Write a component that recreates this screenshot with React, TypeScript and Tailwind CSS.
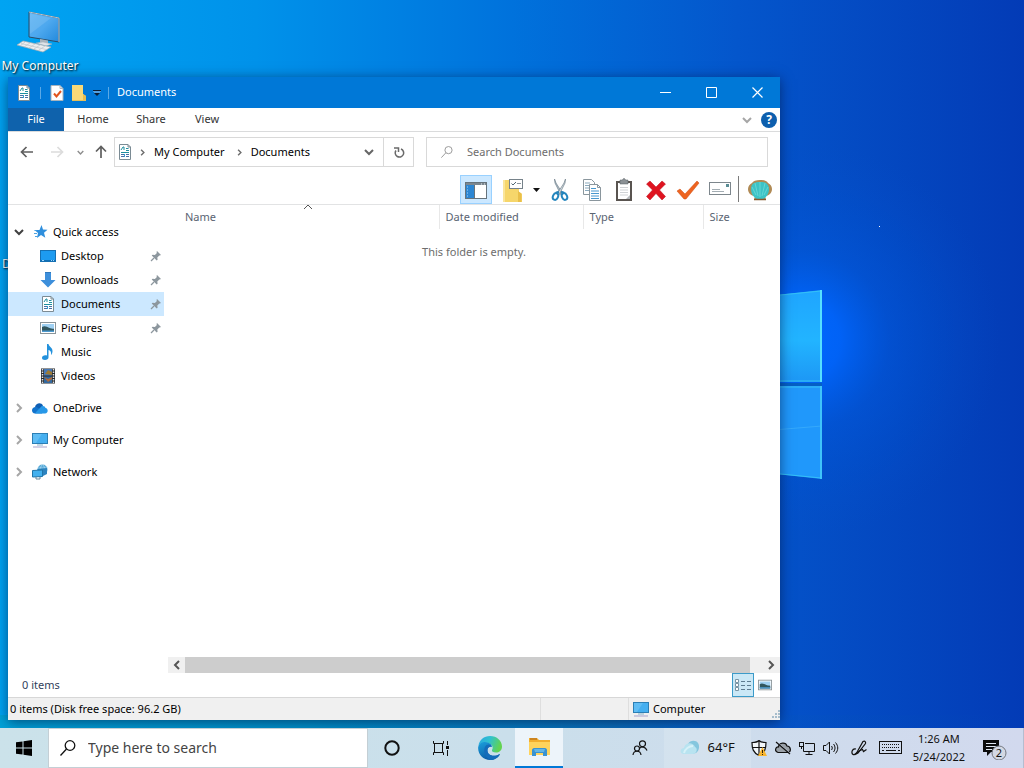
import React from "react";

type IconProps = { className?: string };

interface TreeItemProps {
  label: string;
  icon: React.ReactNode;
  pinned?: boolean;
  selected?: boolean;
}

const Wallpaper: React.FC = () => (
  <svg
    className="absolute inset-0 w-full h-full"
    viewBox="0 0 1024 768"
    preserveAspectRatio="xMaxYMid slice"
    aria-hidden="true"
  >
    <defs>
      <linearGradient id="sky" x1="0" y1="0.1" x2="1" y2="0.1">
        <stop offset="0" stopColor="#00a4f2" />
        <stop offset="0.25" stopColor="#0092ea" />
        <stop offset="0.5" stopColor="#0072dc" />
        <stop offset="0.72" stopColor="#0456cc" />
        <stop offset="1" stopColor="#033bb6" />
      </linearGradient>
      <linearGradient id="floor" x1="0" y1="0" x2="1" y2="0">
        <stop offset="0" stopColor="#00a2d8" />
        <stop offset="0.3" stopColor="#0090c8" />
        <stop offset="0.6" stopColor="#0a6cb8" />
        <stop offset="0.76" stopColor="#0554c4" stopOpacity="0.6" />
        <stop offset="1" stopColor="#0342b4" stopOpacity="0" />
      </linearGradient>
      <radialGradient id="glow" cx="800" cy="340" r="200" gradientUnits="userSpaceOnUse">
        <stop offset="0" stopColor="#0068ff" />
        <stop offset="0.2" stopColor="#0066ff" stopOpacity="0.85" />
        <stop offset="0.45" stopColor="#005ce6" stopOpacity="0.4" />
        <stop offset="1" stopColor="#0050cc" stopOpacity="0" />
      </radialGradient>
      <linearGradient id="paneTop" x1="0" y1="0" x2="0" y2="1">
        <stop offset="0" stopColor="#1fa5ff" />
        <stop offset="0.55" stopColor="#22b4ff" />
        <stop offset="1" stopColor="#1d97f5" />
      </linearGradient>
    </defs>
    <rect width="1024" height="768" fill="url(#sky)" />
    <rect y="715" width="1024" height="53" fill="url(#floor)" />
    <rect x="600" y="120" width="424" height="440" fill="url(#glow)" />
    <path d="M700 303 822 290V382H700z" fill="url(#paneTop)" />
    <path d="M700 383h122v3H700z" fill="#0560c4" />
    <path d="M700 386H822V479L700 466z" fill="#2098fb" />
    <path d="M700 436 822 426" stroke="#35a9fb" strokeWidth="1" />
    <path d="M700 303 821 291V381H700M700 387H821V478L700 466" fill="none" stroke="#35c1f6" strokeWidth="1" />
    <path d="M821 290v92" stroke="#55e0ff" strokeWidth="2" />
    <path d="M821 386v93" stroke="#3fc4fa" strokeWidth="2" />
    <rect x="879" y="226" width="1" height="1" fill="#fff" />
  </svg>
);

const DesktopComputerIcon: React.FC<IconProps> = ({ className }) => (
  <svg className={className} viewBox="0 0 48 44" aria-hidden="true">
    <defs>
      <linearGradient id="screen" x1="0" y1="0" x2="1" y2="1">
        <stop offset="0" stopColor="#5db4f4" />
        <stop offset="0.5" stopColor="#4da8ee" />
        <stop offset="1" stopColor="#2289dc" />
      </linearGradient>
    </defs>
    <path d="M13 2 43 8V32L13 27z" fill="url(#screen)" stroke="#2b4b66" strokeWidth="1" />
    <path d="M13 2 43 8V32" fill="none" stroke="#b9c3ca" strokeWidth="1" />
    <path d="M14 3.500 35 8 14 24z" fill="#fff" opacity="0.12" />
    <path d="M24 29l8 1.500v4h-8z" fill="#aab4bd" />
    <path d="M20 33l7-1 9 2-6 2z" fill="#dfe3e8" stroke="#a4afb8" strokeWidth="0.500" />
    <path d="M7 31 35 37 27 42 1 35z" fill="#eceef0" stroke="#a2abb2" strokeWidth="0.700" />
    <path d="M5 33.500 30 39.500M9 32l-5 4M14 33l-6 4M19 34l-6 4M24 35l-6 4M29 36l-6 4" stroke="#bdc4ca" strokeWidth="0.700" />
  </svg>
);

const DocumentIcon: React.FC<IconProps> = ({ className }) => (
  <svg className={className} viewBox="0 0 16 16" aria-hidden="true">
    <path d="M2.500.500h8.500l2.500 2.500v12.500h-11z" fill="#fff" stroke="#7b8b94" />
    <path d="M11 .500v2.500h2.500" fill="none" stroke="#7b8b94" />
    <path d="M4 6 6 3h1v3M9 4.500h2.500M9 6.500h3M4 8.500h8" fill="none" stroke="#1f8fa0" />
    <path d="M4 10.500h3M4 12.500h3M9 10.500h3M9 12.500h3" stroke="#4a6fa5" />
    <path d="M7.500 10v3" stroke="#35a0d0" />
  </svg>
);

const CheckedPageIcon: React.FC<IconProps> = ({ className }) => (
  <svg className={className} viewBox="0 0 16 16" aria-hidden="true">
    <path d="M2 .500h9l3 3v12H2z" fill="#fff" stroke="#a9b4bd" />
    <path d="M11 .500v3h3" fill="none" stroke="#a9b4bd" />
    <path d="M5 8.500l2.500 3L12 6" fill="none" stroke="#e2541d" strokeWidth="2" />
  </svg>
);

const SmallFolderIcon: React.FC<IconProps> = ({ className }) => (
  <svg className={className} viewBox="0 0 16 16" aria-hidden="true">
    <path d="M1 0h11v9l3 2v5H1z" fill="#f9d978" />
    <path d="M12 9l3 2v5h-3z" fill="#e9bd4e" />
    <path d="M1 15.500h14" stroke="#e6c05a" />
  </svg>
);

const CustomizeIcon: React.FC<IconProps> = ({ className }) => (
  <svg className={className} viewBox="0 0 8 8" aria-hidden="true">
    <path d="M0 1.500h8" stroke="#0b1c33" />
    <path d="M1 4h6L4 7z" fill="#0b1c33" />
    <path d="M0 2.500h8M1 3.500h6" stroke="#9fc9ee" strokeWidth="0.500" />
  </svg>
);

type Direction = "down" | "right" | "left" | "up";

const chevrons: Record<Direction, string> = {
  down: "M1 3l4 4 4-4",
  right: "M3 1l4 4-4 4",
  left: "M7 1L3 5l4 4",
  up: "M1 7l4-4 4 4",
};

const Chevron: React.FC<IconProps & { dir: Direction; width?: number }> = ({ className, dir, width = 1.5 }) => (
  <svg className={className} viewBox="0 0 10 10" aria-hidden="true">
    <path d={chevrons[dir]} fill="none" stroke="currentColor" strokeWidth={width} />
  </svg>
);

const Arrow: React.FC<IconProps & { d: string }> = ({ className, d }) => (
  <svg className={className} viewBox="0 0 14 14" aria-hidden="true">
    <path d={d} fill="none" stroke="currentColor" strokeWidth="1.700" />
  </svg>
);

const PinIcon: React.FC<IconProps> = ({ className }) => (
  <svg className={className} viewBox="0 0 12 12" aria-hidden="true">
    <path d="M7 1l4 4-1.200.600-.500-.200-2 2 .300 2.300-.900.900L1.700 5.600l.900-.900 2.300.300 2-2-.400-1z" fill="#8d979e" />
    <path d="M4 8L1 11" stroke="#8d979e" strokeWidth="1.300" />
  </svg>
);

const StarIcon = () => (
  <svg className="w-4 h-4" viewBox="0 0 16 16" aria-hidden="true">
    <path d="M9.500 1l1.500 4.500 4.500.200-3.500 3 1.300 5L9 11l-4 3 1-5-3.500-3h5z" fill="#2f8fdd" />
    <path d="M2 9.500h3M3 12.500h3M4.500 6.500h-2" stroke="#4da3e2" />
  </svg>
);

const DesktopIcon = () => (
  <svg className="w-4 h-4" viewBox="0 0 16 16" aria-hidden="true">
    <rect x="0.500" y="2.500" width="15" height="11" fill="#1d9bf0" stroke="#1570b3" />
    <path d="M1 12.500h14" stroke="#0f6fb5" />
    <path d="M2 12.500h2M11 12.500h1M13 12.500h1" stroke="#9dd6ff" />
  </svg>
);

const DownloadIcon = () => (
  <svg className="w-4 h-4" viewBox="0 0 16 16" aria-hidden="true">
    <path d="M5 0h6v8h4.500L8 15.500.500 8H5z" fill="#3d8fdb" />
    <path d="M5 .500h6" stroke="#2f78bd" />
  </svg>
);

const PictureIcon: React.FC<IconProps> = ({ className }) => (
  <svg className={className} viewBox="0 0 16 16" aria-hidden="true">
    <rect x="0.500" y="2.500" width="15" height="11" fill="#fff" stroke="#8a9499" />
    <rect x="2" y="4" width="12" height="8" fill="#9fd0f2" />
    <path d="M2 7c3-1.500 5 0 7 .800s3 1 5 1V12H2z" fill="#31565e" />
    <path d="M2 10.500h12V12H2z" fill="#4d9ad0" />
  </svg>
);

const MusicIcon = () => (
  <svg className="w-4 h-4" viewBox="0 0 16 16" aria-hidden="true">
    <path d="M7 0h1.500c.500 3 4 3.500 4 7 0 1.500-.500 3-1.500 4 .500-3-.500-4.500-2.500-5v7.500C8.500 15 7 16 5 16s-3-1-3-2.300 1.500-2.500 3.300-2.500c.700 0 1.200.100 1.700.300z" fill="#2391dc" />
  </svg>
);

const VideoIcon = () => (
  <svg className="w-4 h-4" viewBox="0 0 16 16" aria-hidden="true">
    <rect x="1" y="0.500" width="14" height="15" fill="#25282c" />
    <path d="M2.500 1v15M13.500 1v15" stroke="#e4e4e4" strokeWidth="1.500" strokeDasharray="1.500 1" />
    <rect x="4" y="1" width="8" height="6.500" fill="#4779b8" />
    <path d="M5 6l3-4 4 2v3z" fill="#9c7a35" />
    <rect x="4" y="8.500" width="8" height="6.500" fill="#33699f" />
    <path d="M4 9l4 2 4-2v2l-4 3z" fill="#b26a38" />
  </svg>
);

const OneDriveIcon = () => (
  <svg className="w-4 h-4" viewBox="0 0 16 16" aria-hidden="true">
    <path d="M3 7c1-4 6-5 8-1.500L7 10z" fill="#0f5fb4" />
    <path d="M0 10.500C0 8 2 6.500 4.500 7L12 11l-2 2.500H3c-2 0-3-1.500-3-3z" fill="#1273cc" />
    <path d="M8 8c1.500-3 5-2.500 5.500 0 3 .500 3 5.500-.500 5.500H3c2-3 3-3.500 5-5.500z" fill="#2798e8" />
  </svg>
);

const ComputerIcon: React.FC<IconProps> = ({ className }) => (
  <svg className={className} viewBox="0 0 16 16" aria-hidden="true">
    <rect x="0.500" y="1.500" width="15" height="10" fill="#45aff0" stroke="#2c7fb5" />
    <path d="M1 2h9L4 11H1z" fill="#7ccbf8" opacity="0.500" />
    <path d="M5 13h6" stroke="#8ab3cb" />
    <path d="M1 15h14" stroke="#a7a3cc" />
  </svg>
);

const NetworkIcon = () => (
  <svg className="w-4 h-4" viewBox="0 0 16 16" aria-hidden="true">
    <circle cx="10.500" cy="5.500" r="5" fill="#56a9d8" />
    <path d="M10.500.500c-3 3-3 7 0 10M10.500.500c3 3 3 7 0 10M6 4h9.500" fill="none" stroke="#b5def4" strokeWidth="0.700" />
    <path d="M5 5l10-1v6l-4 2z" fill="#2d83bf" />
    <path d="M.500 6.500l10-.500v6.500l-10 .500z" fill="#42b0ee" stroke="#1f75a9" />
    <path d="M4 13v2h4v-2" fill="none" stroke="#65869a" />
  </svg>
);

const PaneIcon = () => (
  <svg className="w-6 h-5" viewBox="0 0 24 20" aria-hidden="true">
    <rect x="1.500" y="2.500" width="21" height="16" fill="#fff" stroke="#66737c" />
    <path d="M2 4h20" stroke="#7b8790" strokeWidth="2" />
    <path d="M17 4h1M20 4h1" stroke="#e8eef2" />
    <rect x="2" y="5" width="8" height="13" fill="#2c86d3" />
    <path d="M3 7h1M3 10h1M3 13h1M3 16h1" stroke="#a9d4f6" />
    <path d="M10.500 5v13" stroke="#66737c" />
  </svg>
);

const FolderOptionsIcon = () => (
  <svg className="w-6 h-6" viewBox="0 0 24 24" aria-hidden="true">
    <path d="M2 2h16v12l3 2v8H2z" fill="#f6d66b" />
    <path d="M2 2h2v22H2z" fill="#fae59a" />
    <path d="M17 13l3.500 2.500V24H17z" fill="#e9bf4a" />
    <rect x="8.500" y="1.500" width="13" height="9" fill="#fff" stroke="#76828a" />
    <path d="M10.500 5.500l1.500 1.500 3-3" fill="none" stroke="#4f6573" />
    <path d="M16 5.500h4" stroke="#8d979e" />
  </svg>
);

const CutIcon = () => (
  <svg className="w-6 h-6" viewBox="0 0 24 24" aria-hidden="true">
    <path d="M6.500 1l1.500 4 7 11-2 1L7 5z" fill="#b4c2cb" stroke="#70808b" strokeWidth="0.700" />
    <path d="M17.500 1L16 5 9 16l2 1 6-12z" fill="#d8e1e6" stroke="#70808b" strokeWidth="0.700" />
    <path d="M11 14l-3 1M13 14l3 1" stroke="#2683b8" strokeWidth="2.500" />
    <ellipse cx="7.500" cy="18.500" rx="2.500" ry="3.500" transform="rotate(25 7.500 18.500)" fill="none" stroke="#2485bd" strokeWidth="2" />
    <ellipse cx="16.500" cy="18.500" rx="2.500" ry="3.500" transform="rotate(-25 16.500 18.500)" fill="none" stroke="#2485bd" strokeWidth="2" />
  </svg>
);

const CopyIcon = () => (
  <svg className="w-6 h-6" viewBox="0 0 24 24" aria-hidden="true">
    <path d="M3.500 1.500h8l3 3v12h-11z" fill="#fff" stroke="#8a969d" />
    <path d="M5 5h5M5 7.500h7M5 10h7M5 12.500h7" stroke="#8aa9bd" />
    <path d="M9.500 6.500h8l3 3v13h-11z" fill="#fff" stroke="#8a969d" />
    <path d="M17.500 6.500v3h3" fill="none" stroke="#8a969d" />
    <path d="M11 10.500h5M11 13h8M11 15.500h8M11 18h8M11 20.500h8" stroke="#4898cf" />
  </svg>
);

const PasteIcon = () => (
  <svg className="w-6 h-6" viewBox="0 0 24 24" aria-hidden="true">
    <path d="M4 3h16v20H4z" fill="#595450" />
    <path d="M6 5h12v16H6z" fill="#fff" />
    <path d="M8 2h2.500c.500-2 2.500-2 3 0H16v4H8z" fill="#8b9195" stroke="#565c60" strokeWidth="0.500" />
    <path d="M8 9.500h8M8 12h8M8 14.500h8M8 17h8" stroke="#d0d3d6" />
    <path d="M14 21l4-4v4z" fill="#b4b8bb" />
  </svg>
);

const DeleteIcon = () => (
  <svg className="w-6 h-6" viewBox="0 0 24 24" aria-hidden="true">
    <path d="M6 3l6 6 6-6 3.500 3-6 6 6 6.500L18 22l-6-6.500L6 22l-3.500-3.500 6-6.500-6-6z" fill="#df1420" stroke="#b80f1a" strokeWidth="0.500" />
  </svg>
);

const ConfirmIcon = () => (
  <svg className="w-6 h-6" viewBox="0 0 24 24" aria-hidden="true">
    <path d="M1 13l3-2 5 5L21 3l2 2L10 21H8z" fill="#ee6420" stroke="#cc4a10" strokeWidth="0.500" />
  </svg>
);

const MailIcon = () => (
  <svg className="w-6 h-6" viewBox="0 0 24 24" aria-hidden="true">
    <rect x="1.500" y="4.500" width="21" height="12" fill="#fff" stroke="#7d868c" />
    <path d="M4 11.500h8M4 13.500h12" stroke="#a3adb3" />
    <rect x="18" y="6" width="3" height="3" fill="#5b8d95" />
  </svg>
);

const ShellIcon = () => (
  <svg className="w-6 h-6" viewBox="0 0 24 24" aria-hidden="true">
    <path d="M6 22l1-4c-4 0-7-3-7-7 0-3 2-5 4-6 1-2 4-3 8-3s7 1 8 3c2 1 4 3 4 6 0 4-3 7-7 7l1 4z" fill="#b08a55" />
    <path d="M9 21c-4-2-6-6-6-10 0-3 1-5 3-6 2-1.500 10-1.500 12 0s3 3 3 6c0 4-2 8-6 10z" fill="#3cc3c6" />
    <path d="M12 19V4M10 18L7 5M14 18l3-13M8 17L4 9M16 17l4-8" fill="none" stroke="#6fd9d8" strokeWidth="0.800" />
    <path d="M6 21.500h12" stroke="#87582f" strokeWidth="1.500" />
  </svg>
);

const DetailsIcon = () => (
  <svg className="w-4 h-3" viewBox="0 0 16 12" aria-hidden="true">
    <path d="M.500.500h3v3h-3zM.500 4.500h3v3h-3zM.500 8.500h3v3h-3z" fill="#fff" stroke="#7994a5" />
    <path d="M6 2.500h4M12 2.500h4M6 6.500h4M12 6.500h4M6 10.500h4M12 10.500h4" stroke="#5d7c90" />
  </svg>
);

const SearchIcon: React.FC<IconProps> = ({ className }) => (
  <svg className={className} viewBox="0 0 16 16" aria-hidden="true">
    <circle cx="10" cy="5.500" r="4.800" fill="none" stroke="currentColor" strokeWidth="1.300" />
    <path d="M6.500 9L.500 15.500" stroke="currentColor" strokeWidth="1.300" />
  </svg>
);

const EdgeIcon = () => (
  <svg className="w-6 h-6" viewBox="0 0 24 24" aria-hidden="true">
    <defs>
      <linearGradient id="edgeWave" x1="0" y1="0" x2="1" y2="0.300">
        <stop offset="0" stopColor="#2aa5e2" />
        <stop offset="0.500" stopColor="#2fc1cf" />
        <stop offset="1" stopColor="#62d351" />
      </linearGradient>
      <linearGradient id="edgeBody" x1="0" y1="0" x2="0.500" y2="1">
        <stop offset="0" stopColor="#1ba0dd" />
        <stop offset="1" stopColor="#0c59a4" />
      </linearGradient>
    </defs>
    <path d="M.500 10C1 4 6 0 12 0c7 0 12 5 12 10.500 0 4-3 6-6 6s-4.500-1.300-4-2.500c1-1.300 1-4-1-5.500C9 5.500 3 6 .500 10z" fill="url(#edgeWave)" />
    <path d="M.200 11C1 6.500 7 4.500 11 7c2 1 3 2.500 3 4-1.500-1-4 0-4.500 2.500C8.500 19 15 22 22 18c-2 4-6 6-10 6C5 24-.500 18 .200 11z" fill="url(#edgeBody)" />
    <path d="M8.500 9C5 12 5 20 12 24c4 0 8-2 10-6-7 4-13 1-12.500-4.500.500-2 2-3 4.500-2.500-1-3-4-3-5.500-2z" fill="#146cba" />
  </svg>
);

const ExplorerIcon = () => (
  <svg className="w-6 h-6" viewBox="0 0 24 24" aria-hidden="true">
    <path d="M2 3h8l2 2h11v15H2z" fill="#f2ae2e" />
    <path d="M2 7h21v13H2z" fill="#ffd35c" />
    <path d="M3 4h7" stroke="#cc8420" strokeWidth="2" />
    <path d="M5 21v-6c0-1 1-2 2-2h11c1 0 2 1 2 2v6h-4v-3H9v3z" fill="#3a93d1" />
    <path d="M7 14h11l-1 3H8z" fill="#63b6e7" />
  </svg>
);

const TaskViewIcon = () => (
  <svg className="w-4 h-4" viewBox="0 0 16 16" fill="none" stroke="#111" aria-hidden="true">
    <path d="M.500 1v2.500h10V1M.500 15v-2.500h10V15" />
    <rect x="1.500" y="3.500" width="8" height="9" />
    <path d="M14.500 1v4M14.500 10v6" />
    <path d="M13 7.500h3" strokeWidth="3" />
  </svg>
);

const PeopleIcon = () => (
  <svg className="w-4 h-4" viewBox="0 0 16 16" fill="none" stroke="#111" strokeWidth="1.200" aria-hidden="true">
    <circle cx="10.500" cy="3.800" r="3" />
    <path d="M7.500 8.500c2-2.500 6-2 7.500 2" />
    <circle cx="5" cy="8.500" r="2.500" />
    <path d="M1 15c.500-5 7.500-5 8 0" />
  </svg>
);

const WeatherIcon = () => (
  <svg className="w-5 h-5" viewBox="0 0 20 20" aria-hidden="true">
    <path d="M8 6c2-4 8-4 10-1 2 3 1 8-2 10l-5 1z" fill="#84c6de" />
    <path d="M4 16c-5 0-4-6 0-6 1-6 9-6 11-1 3 1 2 7-2 7z" fill="#b8e3f0" />
    <path d="M4 15c1-4 5-7 9-7" fill="none" stroke="#d6f1f8" strokeWidth="2" />
  </svg>
);

const ShieldIcon = () => (
  <svg className="w-4 h-4" viewBox="0 0 16 16" aria-hidden="true">
    <path d="M8 .500c2 2 4 2 7 2 0 6-1 10-7 13C2 12.500 1 8.500 1 2.500c3 0 5 0 7-2z" fill="#f2f6f9" stroke="#111" strokeWidth="1.200" />
    <path d="M8 1v14M1 7.500h14" stroke="#111" strokeWidth="1.200" />
    <path d="M11.500 7l4.500 9H7z" fill="#f7b52f" />
    <path d="M11.500 10v3M11.500 14v1" stroke="#2f220a" />
  </svg>
);

const CloudOffIcon = () => (
  <svg className="w-4 h-4" viewBox="0 0 16 16" aria-hidden="true">
    <path d="M3 12.500c-4-1-2.500-6 .500-5.500C4 2 11 2 12 6c4 0 4.500 6 1 6.500z" fill="#9aa1a8" stroke="#111" strokeWidth="1.200" />
    <path d="M2 2l14 12" stroke="#d0dbec" />
    <path d="M1 2l14 12" stroke="#111" strokeWidth="1.200" />
  </svg>
);

const LanIcon = () => (
  <svg className="w-4 h-4" viewBox="0 0 16 16" fill="none" stroke="#111" aria-hidden="true">
    <path d="M6 3.500h9.500v8H4.500V7" />
    <rect x="0.500" y="2.500" width="4" height="4" />
    <path d="M2.500 6v3M10 11.500v3M6.500 14.500h7" />
  </svg>
);

const VolumeIcon = () => (
  <svg className="w-4 h-4" viewBox="0 0 16 16" fill="none" stroke="#111" aria-hidden="true">
    <path d="M.500 5.500H3L6.500 2v12L3 10.500H.500z" />
    <path d="M8.500 6c1 1.300 1 2.700 0 4M10.500 4c2 2.500 2 5.500 0 8M12.500 2.500c3 3.500 3 7.500 0 11" />
  </svg>
);

const PenIcon = () => (
  <svg className="w-4 h-4" viewBox="0 0 16 16" fill="none" stroke="#111" strokeWidth="1.200" aria-hidden="true">
    <path d="M5 14L12 1.500c2-1 3 .500 2.500 2L7 13z" />
    <path d="M5 9c-4-1-5 4-3 5.500 2 1 3-2 7-4l2.500-1 1 2 3-2" />
  </svg>
);

const KeyboardIcon = () => (
  <svg className="w-6 h-4" viewBox="0 0 24 16" fill="none" stroke="#111" aria-hidden="true">
    <rect x="0.500" y="1.500" width="22" height="12" />
    <path d="M3 4.500h18M3 7.500h18" strokeDasharray="1 1" />
    <path d="M3 10.500h2M7 10.500h10M19 10.500h2" />
  </svg>
);

const NotificationIcon = () => (
  <svg className="w-6 h-6" viewBox="0 0 24 24" aria-hidden="true">
    <path d="M0 4h16v12H8l-4 4v-4H0z" fill="#0c0c0c" />
    <path d="M3 7.500h10M3 10.500h10M3 13.500h6" stroke="#dfe6f0" />
    <circle cx="16" cy="17" r="7" fill="#d3d8e3" stroke="#747880" />
  </svg>
);

const TreeItem: React.FC<TreeItemProps> = ({ label, icon, pinned, selected }) => (
  <li>
    <button
      className={`flex h-6 w-full items-center gap-[5px] pl-8 pr-[2px] text-left ${selected ? "bg-[#cce8ff]" : ""}`}
    >
      {icon}
      <span className="flex-1">{label}</span>
      {pinned && <PinIcon className="w-3 h-3" />}
    </button>
  </li>
);

const TreeRoot: React.FC<{ label: string; icon: React.ReactNode; open?: boolean }> = ({ label, icon, open }) => (
  <button className="flex h-6 w-full items-center gap-[5px] pl-[6px] text-left">
    <Chevron
      dir={open ? "down" : "right"}
      width={2}
      className={open ? "mr-[3px] w-[10px] h-[10px] text-[#404040]" : "mr-[3px] w-[10px] h-[10px] text-[#a6a6a6]"}
    />
    {icon}
    <span>{label}</span>
  </button>
);

const quickAccess: TreeItemProps[] = [
  { label: "Desktop", icon: <DesktopIcon />, pinned: true },
  { label: "Downloads", icon: <DownloadIcon />, pinned: true },
  { label: "Documents", icon: <DocumentIcon className="w-4 h-4" />, pinned: true, selected: true },
  { label: "Pictures", icon: <PictureIcon className="w-4 h-4" />, pinned: true },
  { label: "Music", icon: <MusicIcon /> },
  { label: "Videos", icon: <VideoIcon /> },
];

const tools = [
  { label: "Cut", icon: <CutIcon /> },
  { label: "Copy", icon: <CopyIcon /> },
  { label: "Paste", icon: <PasteIcon /> },
  { label: "Delete", icon: <DeleteIcon /> },
  { label: "Apply", icon: <ConfirmIcon /> },
  { label: "Mail", icon: <MailIcon /> },
];

const TitleBar: React.FC = () => (
  <header className="flex h-[31px] shrink-0 items-center bg-[#0078d7] text-white">
    <DocumentIcon className="ml-2 w-4 h-4" />
    <span className="ml-2 h-3 w-px bg-[#5ba9e6]" />
    <button className="ml-2" aria-label="Properties">
      <CheckedPageIcon className="w-4 h-4" />
    </button>
    <button className="ml-[6px]" aria-label="New folder">
      <SmallFolderIcon className="w-4 h-4" />
    </button>
    <button className="ml-[3px] p-[3px]" aria-label="Customize">
      <CustomizeIcon className="w-2 h-2" />
    </button>
    <span className="ml-1 h-3 w-px bg-[#5ba9e6]" />
    <h1 className="ml-2 flex-1">Documents</h1>
    <button className="flex h-full w-[46px] items-center justify-center" aria-label="Minimize">
      <svg className="w-[11px] h-[11px]" viewBox="0 0 11 11"><path d="M0 5.500h11" stroke="#fff" /></svg>
    </button>
    <button className="flex h-full w-[46px] items-center justify-center" aria-label="Maximize">
      <svg className="w-[11px] h-[11px]" viewBox="0 0 11 11"><path d="M.500.500h10v10H.500z" fill="none" stroke="#fff" /></svg>
    </button>
    <button className="flex h-full w-[46px] items-center justify-center" aria-label="Close">
      <svg className="w-[11px] h-[11px]" viewBox="0 0 11 11"><path d="M.500.500l10 10M10.500.500l-10 10" stroke="#fff" strokeWidth="1.200" /></svg>
    </button>
  </header>
);

const RibbonTabs: React.FC = () => (
  <nav className="flex h-6 shrink-0 items-center border-b border-[#dadbdc] text-[#333]">
    <button className="h-full w-14 bg-[#0f62ac] text-white">File</button>
    <button className="h-full w-[58px]">Home</button>
    <button className="h-full w-[58px]">Share</button>
    <button className="h-full w-[54px]">View</button>
    <button className="ml-auto" aria-label="Expand ribbon">
      <Chevron dir="down" className="w-[10px] h-[10px] text-[#a6a6a6]" width={2} />
    </button>
    <button
      className="ml-[9px] mr-[3px] flex h-4 w-4 items-center justify-center rounded-full bg-[#0d5fae] text-xs font-bold text-white"
      aria-label="Help"
    >
      ?
    </button>
  </nav>
);

const AddressBar: React.FC = () => (
  <div className="flex h-10 shrink-0 items-center pr-3">
    <button className="ml-3 text-[#5f5f5f]" aria-label="Back">
      <Arrow d="M13 7H1.500M6.500 2L1.500 7l5 5" className="w-[14px] h-[14px]" />
    </button>
    <button className="ml-4 text-[#dcdcdc]" aria-label="Forward">
      <Arrow d="M1 7h11.500M7.500 2l5 5-5 5" className="w-[14px] h-[14px]" />
    </button>
    <button className="ml-[13px] text-[#8c8c8c]" aria-label="Recent locations">
      <Chevron dir="down" className="w-[7px] h-[7px]" width={2} />
    </button>
    <button className="ml-[10px] text-[#5f5f5f]" aria-label="Up">
      <Arrow d="M7 13V1.500M2 6.500l5-5 5 5" className="w-[14px] h-[14px]" />
    </button>
    <div className="ml-[6px] flex h-[30px] w-[300px] items-center border border-[#d9d9d9]">
      <DocumentIcon className="ml-[2px] w-4 h-4" />
      <Chevron dir="right" className="ml-[6px] w-[7px] h-[7px] text-[#6d6d6d]" width={2} />
      <button className="ml-2">My Computer</button>
      <Chevron dir="right" className="ml-[11px] w-[7px] h-[7px] text-[#6d6d6d]" width={2} />
      <button className="ml-2">Documents</button>
      <button className="ml-auto mr-[9px]" aria-label="Previous locations">
        <Chevron dir="down" className="w-[10px] h-[10px] text-[#666]" width={2} />
      </button>
      <button className="flex h-full w-[30px] items-center justify-center border-l border-[#d9d9d9]" aria-label="Refresh">
        <svg className="w-3 h-3" viewBox="0 0 12 12" fill="none" stroke="#6a6a6a" strokeWidth="1.500" aria-hidden="true">
          <path d="M8 3A4.200 4.200 0 1 1 3 4.500M1 2h4.500v4" />
        </svg>
      </button>
    </div>
    <label className="ml-3 flex h-[30px] flex-1 items-center border border-[#d9d9d9] pl-[14px]">
      <SearchIcon className="w-3 h-3 text-[#999]" />
      <input
        type="search"
        aria-label="Search Documents"
        placeholder="Search Documents"
        className="ml-[14px] min-w-0 flex-1 outline-none placeholder:text-[#6d6d6d]"
      />
    </label>
  </div>
);

const Toolbar: React.FC = () => (
  <div className="flex h-[33px] shrink-0 items-end justify-end border-b border-[#e2e3e4] pr-2">
    <button
      className="flex h-[29px] w-8 items-center justify-center border border-[#99d1ff] bg-[#cce8ff]"
      aria-label="Navigation pane"
    >
      <PaneIcon />
    </button>
    <button className="ml-[9px] flex h-[29px] items-center" aria-label="Folder options">
      <FolderOptionsIcon />
      <svg className="ml-2 w-[7px] h-1" viewBox="0 0 7 4"><path d="M0 0h7L3.500 4z" fill="#111" /></svg>
    </button>
    <div className="ml-2 flex gap-2">
      {tools.map((tool) => (
        <button key={tool.label} className="flex h-[29px] items-center" aria-label={tool.label}>
          {tool.icon}
        </button>
      ))}
    </div>
    <span className="mx-[6px] mb-[2px] h-[26px] w-px bg-[#7b7b7b]" />
    <button className="ml-[3px] flex h-[29px] items-center" aria-label="Shell settings">
      <ShellIcon />
    </button>
  </div>
);

const FolderTree: React.FC = () => (
  <aside className="w-[156px] shrink-0 pt-[15px]">
    <TreeRoot label="Quick access" icon={<StarIcon />} open />
    <ul>
      {quickAccess.map((item) => (
        <TreeItem key={item.label} {...item} />
      ))}
    </ul>
    <div className="mt-2 flex flex-col gap-2">
      <TreeRoot label="OneDrive" icon={<OneDriveIcon />} />
      <TreeRoot label="My Computer" icon={<ComputerIcon className="w-4 h-4" />} />
      <TreeRoot label="Network" icon={<NetworkIcon />} />
    </div>
  </aside>
);

const FileList: React.FC = () => (
  <main className="ml-1 flex min-w-0 flex-1 flex-col">
    <table className="w-full table-fixed text-left text-[#5a6472]">
      <thead>
        <tr className="h-6">
          <th className="relative pl-[17px] font-normal">
            Name
            <Chevron dir="up" className="absolute left-1/2 top-[-3px] w-[10px] h-[10px] text-[#555]" width={1} />
          </th>
          <th className="w-36 border-l border-[#e8e8e8] pl-[6px] font-normal">Date modified</th>
          <th className="w-[120px] border-l border-[#e8e8e8] pl-[6px] font-normal">Type</th>
          <th className="w-[77px] border-l border-[#e8e8e8] pl-[6px] font-normal">Size</th>
        </tr>
      </thead>
      <tbody>
        <tr className="h-[46px]">
          <td colSpan={4} className="text-center text-[#6d6d6d]">This folder is empty.</td>
        </tr>
      </tbody>
    </table>
    <div className="mt-auto flex h-4 items-center bg-[#f0f0f0]">
      <button className="flex w-[17px] justify-center" aria-label="Scroll left">
        <Chevron dir="left" className="w-[10px] h-[10px] text-[#555]" width={2} />
      </button>
      <div className="h-full flex-1 bg-[#cdcdcd]" />
      <button className="ml-3 flex w-[18px] justify-center" aria-label="Scroll right">
        <Chevron dir="right" className="w-[10px] h-[10px] text-[#555]" width={2} />
      </button>
    </div>
  </main>
);

const StatusBars: React.FC = () => (
  <footer className="shrink-0">
    <div className="flex h-6 items-center pl-[14px] pr-1 text-[#333f5c]">
      <span className="flex-1">0 items</span>
      <button className="flex h-full w-[22px] items-center justify-center border border-[#3c9bc9] bg-[#cbe8f6]" aria-label="Details view">
        <DetailsIcon />
      </button>
      <button className="flex h-full w-[22px] items-center justify-center" aria-label="Large icons view">
        <PictureIcon className="w-[14px] h-[14px]" />
      </button>
    </div>
    <div className="flex h-[23px] items-center border-t border-[#d7d7d7] bg-[#f0f0f0] pl-[2px]">
      <span className="flex-1">0 items (Disk free space: 96.2 GB)</span>
      <span className="h-full w-[88px] border-l border-[#dedede]" />
      <span className="flex h-full w-[144px] items-center gap-1 border-l border-[#dedede] pl-1">
        <ComputerIcon className="w-4 h-4" />
        <span>Computer</span>
      </span>
      <svg className="mb-[2px] w-2 h-2 self-end" viewBox="0 0 8 8" fill="#a5bccb" aria-hidden="true">
        <path d="M6 0h2v2H6zM3 3h2v2H3zM6 3h2v2H6zM0 6h2v2H0zM3 6h2v2H3zM6 6h2v2H6z" />
      </svg>
    </div>
  </footer>
);

const ExplorerWindow: React.FC = () => (
  <section className="absolute bottom-2 left-2 right-[244px] top-[77px] flex flex-col bg-white text-black shadow-[0_2px_12px_rgba(0,20,60,0.6)]">
    <TitleBar />
    <RibbonTabs />
    <AddressBar />
    <Toolbar />
    <div className="flex min-h-0 flex-1">
      <FolderTree />
      <FileList />
    </div>
    <StatusBars />
  </section>
);

const Taskbar: React.FC = () => (
  <footer className="relative flex h-10 shrink-0 items-center bg-linear-to-r from-[#cbe2ea] via-[#cadfeb] to-[#d2d9ee] text-[#111]">
    <button className="flex h-full w-12 items-center justify-center" aria-label="Start">
      <svg className="w-4 h-4" viewBox="0 0 16 16" aria-hidden="true">
        <path d="M0 2.300L6.500 1.400V7.500H0zM7.500 1.200L16 0v7.500H7.500zM0 8.500h6.500v6.100L0 13.700zM7.500 8.500H16V16l-8.500-1.200z" />
      </svg>
    </button>
    <label className="flex h-full w-80 items-center gap-3 border border-[#c4cfd5] bg-white pl-[11px]">
      <SearchIcon className="w-4 h-4" />
      <input
        type="search"
        aria-label="Type here to search"
        placeholder="Type here to search"
        className="min-w-0 flex-1 text-sm outline-none placeholder:text-[#444]"
      />
    </label>
    <div className="flex h-full gap-px">
      <button className="flex w-12 items-center justify-center" aria-label="Cortana">
        <svg className="w-4 h-4" viewBox="0 0 16 16"><circle cx="8" cy="8" r="6.700" fill="none" stroke="#111" strokeWidth="2" /></svg>
      </button>
      <button className="flex w-12 items-center justify-center" aria-label="Task view"><TaskViewIcon /></button>
      <button className="flex w-12 items-center justify-center" aria-label="Microsoft Edge"><EdgeIcon /></button>
      <button className="flex w-12 items-center justify-center border-b-2 border-[#0078d7] bg-[#edf4fa]" aria-label="File Explorer">
        <ExplorerIcon />
      </button>
    </div>
    <div className="ml-auto flex h-full items-center">
      <button className="mr-4" aria-label="People"><PeopleIcon /></button>
      <button className="flex h-full items-center gap-2 bg-white/15 px-4">
        <WeatherIcon />
        <span className="text-[13px]">64°F</span>
      </button>
      <div className="flex items-center gap-2">
        <button aria-label="Security"><ShieldIcon /></button>
        <button aria-label="Cloud sync off"><CloudOffIcon /></button>
        <button aria-label="Network"><LanIcon /></button>
        <button aria-label="Volume"><VolumeIcon /></button>
      </div>
      <button className="ml-3" aria-label="Pen"><PenIcon /></button>
      <button className="ml-3" aria-label="Touch keyboard"><KeyboardIcon /></button>
      <button className="ml-[10px] text-center leading-[18px]">
        <span className="block">1:26 AM</span>
        <span className="block">5/24/2022</span>
      </button>
      <button className="relative ml-[18px] mr-4" aria-label="Notifications">
        <NotificationIcon />
        <span className="absolute bottom-0 right-0 w-4 text-center text-[11px] leading-[14px]">2</span>
      </button>
      <span className="h-full w-px bg-[#b4bdd0]" />
    </div>
  </footer>
);

const App: React.FC = () => {
  return (
    <div className="relative flex h-screen flex-col overflow-hidden font-['Noto_Sans','Open_Sans',sans-serif] text-[11px]">
      <Wallpaper />
      <div className="relative min-h-0 flex-1 overflow-hidden">
        <button className="absolute left-0 top-[10px] flex w-20 flex-col items-center text-white [text-shadow:1px_1px_2px_#000]">
          <DesktopComputerIcon className="w-12 h-11" />
          <span className="mt-[4px] text-xs whitespace-nowrap">My Computer</span>
        </button>
        <span className="absolute left-[2px] top-64 text-xs text-white [text-shadow:1px_1px_2px_#000]">D</span>
        <ExplorerWindow />
      </div>
      <Taskbar />
    </div>
  );
};

export default App;
